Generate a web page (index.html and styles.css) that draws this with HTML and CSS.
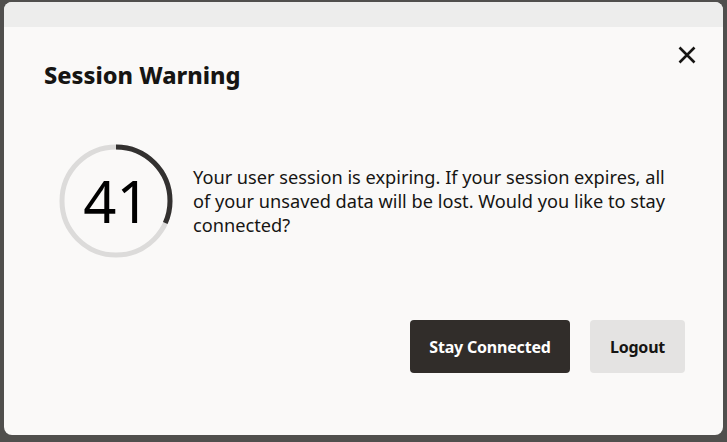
FILE: index.html
```html
<!DOCTYPE html>
<html lang="en">
<head>
<meta charset="utf-8">
<title>Session Warning</title>
<link rel="stylesheet" href="styles.css">
</head>
<body>
<div class="dialog">
  <div class="band"></div>
  <div class="header">
    <h1 class="title">Session Warning</h1>
    <button class="close" aria-label="Close">
      <svg width="20" height="20" viewBox="0 0 20 20"><path d="M2.5 2.5 L17.5 17.5 M17.5 2.5 L2.5 17.5" stroke="#161513" stroke-width="2.6" fill="none"/></svg>
    </button>
  </div>
  <div class="body">
    <div class="timer">
      <svg width="114" height="114" viewBox="0 0 114 114">
        <circle cx="57" cy="57" r="54" fill="none" stroke="#dcdbda" stroke-width="5"/>
        <circle cx="57" cy="57" r="54" fill="none" stroke="#333130" stroke-width="5" stroke-dasharray="107.4 400" transform="rotate(-90 57 57)"/>
      </svg>
      <span class="count">41</span>
    </div>
    <p class="message">Your user session is expiring. If your session expires, all of your unsaved data will be lost. Would you like to stay connected?</p>
  </div>
  <div class="footer">
    <button class="btn primary">Stay Connected</button>
    <button class="btn secondary">Logout</button>
  </div>
</div>
</body>
</html>
```
FILE: styles.css
```css
html, body {
  margin: 0;
  padding: 0;
}
body {
  background: #504f4d;
  width: 727px;
  height: 442px;
  overflow: hidden;
  font-family: "Noto Sans", "Open Sans", sans-serif;
  color: #161513;
}
.dialog {
  width: 719px;
  height: 433px;
  margin: 2px 0 0 4px;
  border-radius: 8px;
  overflow: hidden;
  background: #faf9f8;
  display: flex;
  flex-direction: column;
}
.band {
  height: 25px;
  background: #ededec;
}
.header {
  display: flex;
  justify-content: space-between;
  align-items: flex-start;
  padding: 33px 26px 0 40px;
}
.title {
  margin: 0;
  font-size: 23.5px;
  font-weight: 800;
  line-height: 30px;
}
.close {
  border: 0;
  background: none;
  padding: 0;
  margin-top: -15px;
  width: 20px;
  height: 20px;
  display: flex;
}
.body {
  display: flex;
  align-items: center;
  gap: 20px;
  padding: 54px 40px 0 55px;
}
.timer {
  position: relative;
  width: 114px;
  height: 114px;
  flex: none;
}
.timer svg {
  display: block;
}
.count {
  position: absolute;
  inset: 0;
  display: flex;
  align-items: center;
  justify-content: center;
  font-size: 58px;
  font-weight: 400;
  color: #000;
  line-height: 1;
  padding-left: 1px;
}
.message {
  margin: 0;
  font-size: 18.2px;
  line-height: 24px;
  width: 485px;
}
.footer {
  display: flex;
  justify-content: flex-end;
  gap: 20px;
  padding: 62px 38px 0 0;
}
.btn {
  height: 53px;
  border: 0;
  border-radius: 4px;
  font-family: "Noto Sans", "Open Sans", sans-serif;
  font-size: 16px;
  font-weight: 700;
  letter-spacing: -0.2px;
  padding: 0;
  white-space: nowrap;
}
.primary {
  background: #312d2a;
  color: #fff;
  width: 160px;
}
.secondary {
  background: #e4e3e2;
  color: #161513;
  width: 95px;
}
```
